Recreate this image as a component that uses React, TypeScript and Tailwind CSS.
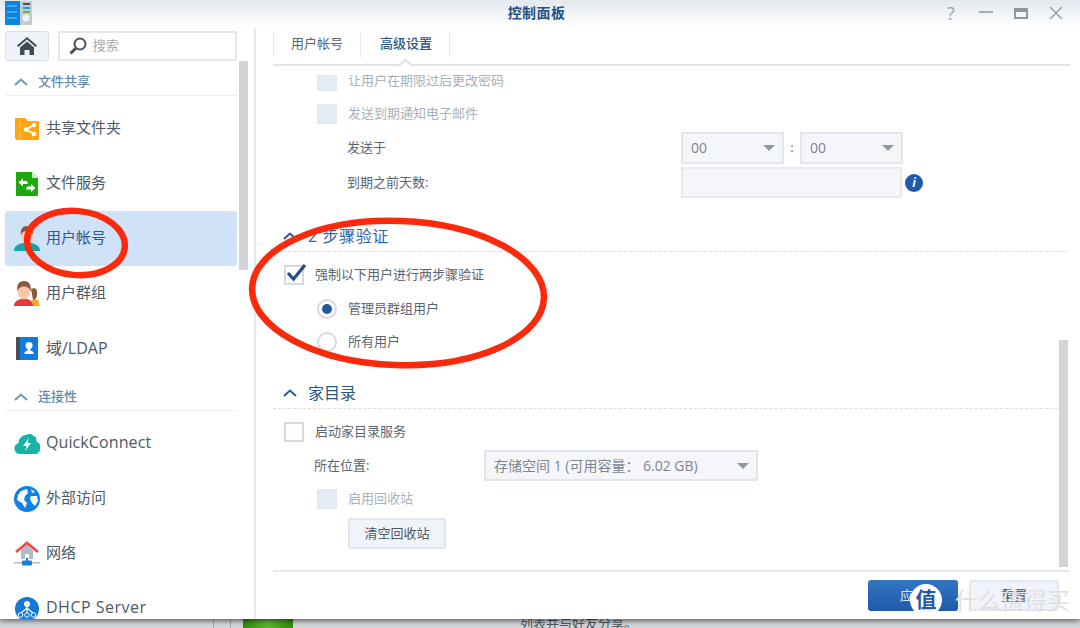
import React from 'react';

const cjk = { fontFamily: '"Open Sans", "Noto Sans CJK SC", sans-serif' };

// ---- sidebar icons ----

const FolderIcon = () => (
    <svg width="26" height="26" viewBox="0 0 26 26">
        <path d="M2 2h9l3 3h10a1 1 0 0 1 1 1v17a1 1 0 0 1-1 1H3a2 2 0 0 1-2-2V3a1 1 0 0 1 1-1z" fill="#ffa50f" />
        <path d="M6 5v19" stroke="#ffc254" strokeWidth="1" />
        <path d="M20 9l-8 4.500 8 4.500" stroke="#fff" strokeWidth="1.600" fill="none" />
        <circle cx="12" cy="13.500" r="2.300" fill="#fff" />
        <circle cx="20" cy="9" r="2.300" fill="#fff" />
        <circle cx="20" cy="18" r="2.300" fill="#fff" />
    </svg>
);

const FileServiceIcon = () => (
    <svg width="24" height="26" viewBox="0 0 24 26">
        <path d="M2 1h15l6 6v17a1 1 0 0 1-1 1H2a1 1 0 0 1-1-1V2a1 1 0 0 1 1-1z" fill="#1fa80e" />
        <path d="M17 1l6 6h-6z" fill="#c8eec2" />
        <path d="M12 10H8V7.500L3.500 11.500 8 15.500V13h5zM12 15.500h4V13l4.500 4-4.500 4v-2.500h-5z" fill="#fff" />
    </svg>
);

const UserIcon = () => (
    <svg width="26" height="26" viewBox="0 0 26 26">
        <path d="M0 25c0-5 4-7 9-8h8c5 1 9 3 9 8z" fill="#12a5a8" />
        <path d="M10 15h6v4l-3 2-3-2z" fill="#f6c9a6" />
        <ellipse cx="13" cy="9" rx="6" ry="8" fill="#f8c9a4" />
        <path d="M7 9C6 3 9 0 13 0s7 3 6 9c-1-3-3-4-6-4s-5 1-6 4z" fill="#8a5a3c" />
    </svg>
);

const GroupIcon = () => (
    <svg width="26" height="26" viewBox="0 0 26 26">
        <path d="M17 8c4-2 7 0 6 6 0 3-2 5-4 5z" fill="#8a5a3c" />
        <path d="M18 19l6 0 2 6h-7z" fill="#f5a81c" />
        <path d="M0 25c0-4 3-6 7-7h6c4 1 6 3 6 7z" fill="#e5393f" />
        <ellipse cx="10" cy="10" rx="6.500" ry="8.500" fill="#f8c9a4" />
        <path d="M3.500 10C2 3 6 0 10 0s8 3 6.500 10c-1-3-3-4.500-6.500-4.500S4.500 7 3.500 10z" fill="#8a5a3c" />
    </svg>
);

const DirectoryIcon = () => (
    <svg width="24" height="25" viewBox="0 0 24 25">
        <rect x="1" y="1" width="4" height="23" fill="#4a4f57" />
        <rect x="5" y="1" width="18" height="23" rx="1" fill="#0d7be0" />
        <circle cx="14" cy="9.500" r="3.500" fill="#fff" />
        <path d="M12.500 12h3v2.500l3 1.500v2h-9v-2l3-1.500z" fill="#fff" />
    </svg>
);

const CloudIcon = () => (
    <svg width="26" height="22" viewBox="0 0 26 22">
        <path d="M6 21a5.500 5.500 0 0 1-1.500-10.800A8 8 0 0 1 12 2c2-1.500 6-1.500 7.500 1 2.500.5 3.500 3 3 5.500A6.500 6.500 0 0 1 20 21z" fill="#17b3a8" />
        <path d="M15 5l-6 8h3.500L11 18l6-8h-3.500z" fill="#fff" />
    </svg>
);

const GlobeIcon = () => (
    <svg width="26" height="26" viewBox="0 0 26 26">
        <circle cx="13" cy="13" r="13" fill="#1180e8" />
        <path d="M7 5l6-2 1 4-3 3-1 4 3 3-2 5-3-5-5-3 1-5z" fill="#fff" />
        <path d="M17 10l6 0 1 5-3 5-3-3-2-4z" fill="#fff" />
        <path d="M17 3l4 3-3 1z" fill="#fff" />
    </svg>
);

const NetworkIcon = () => (
    <svg width="26" height="26" viewBox="0 0 26 26">
        <path d="M7 9l6-5 6 5v9H7z" fill="#aebcc8" />
        <path d="M2 11L13 2l11 9" stroke="#f2454a" strokeWidth="2.600" fill="none" />
        <rect x="11" y="13" width="4" height="5" fill="#fff" />
        <rect x="12" y="17" width="2" height="4" fill="#1f7ad0" />
        <rect x="0" y="21" width="26" height="1.500" fill="#aebcc8" />
        <rect x="8" y="19.500" width="10" height="5" rx="1" fill="#1c7fd8" />
    </svg>
);

const DhcpIcon = () => (
    <svg width="24" height="24" viewBox="0 0 24 24">
        <circle cx="12" cy="12" r="12" fill="#1478d8" />
        <circle cx="12" cy="7" r="3" fill="#fff" />
        <path d="M12 9v7M12 11l-6 5M12 11l6 5" stroke="#fff" strokeWidth="1.200" fill="none" />
        <circle cx="5.500" cy="18" r="2.300" fill="#1478d8" stroke="#fff" strokeWidth="1" />
        <circle cx="12" cy="18" r="2.300" fill="#1478d8" stroke="#fff" strokeWidth="1" />
        <circle cx="18.500" cy="18" r="2.300" fill="#1478d8" stroke="#fff" strokeWidth="1" />
    </svg>
);

const AppLogo = () => (
    <svg width="27" height="25" viewBox="0 0 27 25">
        <rect x="0" y="0" width="27" height="24" fill="#c3ccd2" />
        <rect x="0" y="0" width="15" height="24" fill="#0f84dd" />
        <path d="M2 5h10M2 11h10M2 17h10" stroke="#55b8f2" strokeWidth="1.500" />
        <rect x="18" y="2" width="7" height="2" fill="#3c5568" />
        <rect x="18" y="6" width="7" height="2" fill="#1a9bd8" />
        <rect x="18" y="10" width="7" height="2" fill="#66b82e" />
        <circle cx="21" cy="17" r="3.500" fill="#eef2f4" />
    </svg>
);

const Chevron = ({ color, width = 2 }: { color: string; width?: number }) => (
    <svg width="14" height="8" viewBox="0 0 14 8" className="shrink-0">
        <path d="M1 7l6-5.500L13 7" stroke={color} strokeWidth={width} fill="none" />
    </svg>
);

const Caret = () => (
    <span className="w-0 h-0 border-x-[6px] border-x-transparent border-t-[6px] border-t-[#8e99a5]" />
);

// ---- sidebar ----

const SideHeader = ({ title }: { title: string }) => (
    <div className="h-[35px] mb-[5px] mr-[17px] ml-[5px] pt-[7px] flex items-center gap-[10px] pl-[9px] border-b border-[#ebeff3]">
        <Chevron color="#6f97b8" />
        <span className="text-[13px] font-medium text-[#5f8cb0]">{title}</span>
    </div>
);

type SideItemProps = { icon: React.ReactNode; label: string; active?: boolean; labelClass?: string };

const SideItem = ({ icon, label, active, labelClass = 'text-[15px] pb-[2px]' }: SideItemProps) => (
    <div className={`h-[55px] ml-[5px] mr-[17px] flex items-center rounded-[3px] ${active ? 'bg-[#cfe2f8]' : ''}`}>
        <div className="w-[41px] shrink-0 flex justify-center pl-[2px]">{icon}</div>
        <span className={`${labelClass} ${active ? 'text-[#2e5b8d]' : 'text-[#4d5966]'}`}>{label}</span>
    </div>
);

function Sidebar() {
    return (
        <div className="relative w-[256px] shrink-0 border-r-2 border-[#e6e9ec] overflow-hidden">
            <div className="flex gap-[9px] pl-[5px] mr-[17px] pt-[3px]">
                <div className="w-[44px] h-[30px] flex items-center justify-center rounded-[3px] border border-[#d6dfe8] bg-[#eff3f8]">
                    <svg width="20" height="18" viewBox="0 0 20 18">
                        <path d="M10 0L0 8.500l1.300 1.500L10 2.600 18.700 10 20 8.500z" fill="#3f4c58" />
                        <path d="M3 10.500L10 4.500l7 6V18h-4.500v-5h-5v5H3z" fill="#3f4c58" />
                    </svg>
                </div>
                <div className="w-[180px] h-[30px] flex items-center gap-[6px] pl-[9px] border-2 border-[#e3e8ee] bg-white">
                    <svg width="18" height="18" viewBox="0 0 18 18">
                        <circle cx="11" cy="7" r="5.500" stroke="#48535e" strokeWidth="2" fill="none" />
                        <path d="M6.800 11.200L1.500 16.500" stroke="#48535e" strokeWidth="3" />
                    </svg>
                    <span className="text-[13px] text-[#a3abb3]">搜索</span>
                </div>
            </div>
            <SideHeader title="文件共享" />
            <SideItem icon={<FolderIcon />} label="共享文件夹" />
            <SideItem icon={<FileServiceIcon />} label="文件服务" />
            <SideItem icon={<UserIcon />} label="用户帐号" active />
            <SideItem icon={<GroupIcon />} label="用户群组" />
            <SideItem icon={<DirectoryIcon />} label="域/LDAP" labelClass="text-[16px] pb-[2px]" />
            <SideHeader title="连接性" />
            <SideItem icon={<CloudIcon />} label="QuickConnect" labelClass="text-[16px] tracking-[0.1px] pb-[4px]" />
            <SideItem icon={<GlobeIcon />} label="外部访问" />
            <SideItem icon={<NetworkIcon />} label="网络" />
            <SideItem icon={<DhcpIcon />} label="DHCP Server" labelClass="text-[16px] tracking-[0.5px] pb-[4px]" />
            <div className="absolute left-[239px] top-[33px] w-[9px] h-[209px] bg-[#d2d4d6]" />
        </div>
    );
}

// ---- form parts ----

const Check = ({ state }: { state: 'off' | 'on' | 'disabled' }) => (
    <div
        className={`relative w-[20px] h-[20px] shrink-0 border-2 ${
            state === 'disabled' ? 'border-[#e3e9f0] bg-[#e6ecf3]' : 'border-[#d3dae2] bg-white'
        }`}
    >
        {state === 'on' && (
            <svg width="22" height="20" viewBox="0 0 22 20" className="absolute left-[-1px] top-[-5px]">
                <path d="M3 11l5.500 6L20 3" stroke="#254f86" strokeWidth="3.200" fill="none" />
            </svg>
        )}
    </div>
);

const Radio = ({ on }: { on?: boolean }) => (
    <div className="w-[20px] h-[20px] shrink-0 rounded-full border-2 border-[#d3dae4] bg-white flex items-center justify-center">
        {on && <div className="w-[10px] h-[10px] rounded-full bg-[#23589c]" />}
    </div>
);

const Section = ({ title, faded }: { title: string; faded?: boolean }) => (
    <div className="h-[31px] flex items-center gap-[11px] pl-[10px] border-b border-dashed border-[#d8e0e8]">
        <Chevron color="#2d5a8e" />
        <span className={`text-[16px] ${faded ? 'text-[#2d66ae] tracking-[0.6px]' : 'text-[#2c5687]'}`}>{title}</span>
    </div>
);

const SelectBox = ({ value, className }: { value: string; className: string }) => (
    <div className={`flex items-center justify-between pl-[8px] pr-[7px] border-2 border-[#e0e6ed] bg-[#f4f6f9] ${className}`}>
        <span className="text-[14px] whitespace-pre text-[#7d858d]">{value}</span>
        <Caret />
    </div>
);

function Tabs() {
    return (
        <div className="relative h-[35px] shrink-0 border-b-2 border-[#e1e3e6] ml-[17px] mr-[10px] flex items-start">
            <div className="h-[26px] px-[17px] flex items-center border-x border-[#e3e9f0] text-[13px] text-[#5a6570]">用户帐号</div>
            <div className="h-[26px] pl-[19px] pr-[17px] flex items-center border-r border-[#e3e9f0] text-[13px] font-medium text-[#2c5687]">高级设置</div>
            <div className="absolute left-[128px] top-[29px] w-[9px] h-[9px] rotate-45 bg-white border-l-2 border-t-2 border-[#e1e3e6]" />
        </div>
    );
}

// everything in the scrolled settings form; the first row sits partly under the white band
function SettingsForm() {
    return (
        <div className="flex-1 min-h-0 overflow-hidden ml-[17px] mr-[12px] relative">
            <div className="absolute left-0 right-0 top-0 h-[9px] bg-white z-10" />
            <div className="text-[13px] text-[#5a6570] -mt-[1px]">
                <div className="h-[32px] flex items-center gap-[11px] pl-[44px] text-[#a9b0b7]">
                    <Check state="disabled" />
                    <span>让用户在期限过后更改密码</span>
                </div>
                <div className="h-[33px] flex items-center gap-[11px] pl-[44px] text-[#a9b0b7]">
                    <Check state="disabled" />
                    <span>发送到期通知电子邮件</span>
                </div>
                <div className="h-[35px] flex items-center pl-[74px]">
                    <span className="w-[334px]">发送于</span>
                    <SelectBox value="00" className="w-[103px] h-[32px]" />
                    <span className="w-[16px] text-center">:</span>
                    <SelectBox value="00" className="w-[103px] h-[32px]" />
                </div>
                <div className="h-[35px] flex items-center pl-[74px]">
                    <span className="w-[334px]">到期之前天数:</span>
                    <div className="w-[221px] h-[31px] border-2 border-[#e6eaef] bg-[#f4f6f9]" />
                    <div className="ml-[3px] w-[18px] h-[18px] rounded-full bg-[#1f5ba8] flex items-center justify-center text-white text-[12px] font-bold italic">i</div>
                </div>

                <div className="mt-[21px]">
                    <Section title="2 步骤验证" faded />
                </div>
                <div className="h-[46px] flex items-center gap-[11px] pl-[11px]">
                    <Check state="on" />
                    <span>强制以下用户进行两步骤验证</span>
                </div>
                <div className="h-[33px] -mt-[6px] flex items-center gap-[11px] pl-[44px]">
                    <Radio on />
                    <span>管理员群组用户</span>
                </div>
                <div className="h-[33px] flex items-center gap-[11px] pl-[44px]">
                    <Radio />
                    <span>所有用户</span>
                </div>

                <div className="mt-[20px]">
                    <Section title="家目录" />
                </div>
                <div className="h-[46px] flex items-center gap-[11px] pl-[11px]">
                    <Check state="off" />
                    <span>启动家目录服务</span>
                </div>
                <div className="h-[33px] -mt-[6px] flex items-center pl-[41px]">
                    <span className="w-[170px]">所在位置:</span>
                    <SelectBox value="存储空间 1 (可用容量： 6.02 GB)" className="w-[274px] h-[31px]" />
                </div>
                <div className="h-[33px] flex items-center gap-[11px] pl-[44px] text-[#a9b0b7]">
                    <Check state="disabled" />
                    <span>启用回收站</span>
                </div>
                <div className="pl-[75px] mt-[3px]">
                    <div className="w-[98px] h-[31px] flex items-center justify-center rounded-[3px] border-2 border-[#dfe6ef] bg-[#f0f4fa] text-[#4d5966]">清空回收站</div>
                </div>
            </div>
            <div className="absolute right-[0px] top-[274px] w-[9px] h-[227px] bg-[#d2d4d6]" />
        </div>
    );
}

function Footer() {
    return (
        <div className="h-[49px] shrink-0 border-t-2 border-[#e6e8ea] ml-[17px] mr-[10px] flex justify-end items-start gap-[11px] pt-[8px] pr-[11px] text-[13px]">
            <div className="w-[90px] h-[31px] flex items-center justify-center rounded-[3px] bg-gradient-to-b from-[#3475c4] to-[#1f5aa6] text-[#dfe9f5]">应用</div>
            <div className="w-[90px] h-[31px] flex items-center justify-center rounded-[3px] border-2 border-[#e1e7ef] bg-[#f0f4fa] text-[#4d5966]">重置</div>
        </div>
    );
}

export default function App() {
    return (
        <div className="relative w-[1080px] h-[628px] overflow-hidden bg-gradient-to-b from-[#8f9296] to-[#d3d6d9]" style={cjk}>
            <div className="w-full h-[619px] bg-white flex flex-col shadow-[0_2px_5px_rgba(0,0,0,0.55)] relative z-10">
                {/* title bar */}
                <div className="relative h-[28px] shrink-0 flex items-center justify-center pr-[7px] pb-[3px] bg-gradient-to-b from-[#e4e9ef] to-white">
                    <div className="absolute left-[5px] top-[1px]"><AppLogo /></div>
                    <span className="text-[14px] font-semibold tracking-[0.4px] text-[#264f84]">控制面板</span>
                    <div className="absolute right-[17px] top-[6px] flex items-center gap-[21px]">
                        <span className="w-[14px] text-[18px] leading-[14px] text-center text-[#9ba4ad]">?</span>
                        <span className="w-[14px] h-[2px] -mt-[2px] bg-[#a5adb5]" />
                        <span className="w-[14px] h-[11px] border-2 border-t-[4px] border-[#8f98a1]" />
                        <svg width="14" height="14" viewBox="0 0 14 14">
                            <path d="M1 1l12 12M13 1L1 13" stroke="#9ba4ad" strokeWidth="1.500" />
                        </svg>
                    </div>
                </div>

                <div className="flex-1 min-h-0 flex">
                    <Sidebar />
                    <div className="flex-1 min-w-0 flex flex-col pt-[3px]">
                        <Tabs />
                        <SettingsForm />
                        <Footer />
                    </div>
                </div>
            </div>

            {/* strip of the desktop window showing underneath */}
            <div className="absolute left-[213px] top-[619px] w-[1px] h-[9px] bg-[#a5a8ac]" />
            <div className="absolute left-[230px] top-[619px] w-[1px] h-[9px] bg-[#a5a8ac]" />
            <div className="absolute left-[243px] top-[619px] w-[50px] h-[9px] bg-gradient-to-r from-[#2d8a10] via-[#5cb82e] to-[#2d8a10]" />
            <div className="absolute left-[520px] top-[614px] text-[13px] text-[#4d5966]">列表并与好友分享。</div>

            {/* hand drawn red marks */}
            <svg width="1080" height="628" viewBox="0 0 1080 628" className="absolute inset-0 z-20 pointer-events-none">
                <ellipse cx="76" cy="243" rx="49" ry="32" fill="none" stroke="#fb2a0c" strokeWidth="6.500" transform="rotate(5 76 243)" />
                <ellipse cx="398" cy="293" rx="146" ry="72" fill="none" stroke="#fb2a0c" strokeWidth="6.500" transform="rotate(2 398 293)" />
            </svg>

            {/* site stamp in the corner */}
            <div className="absolute left-[910px] top-[584px] z-30 flex items-center gap-[13px]">
                <div className="w-[32px] h-[32px] rounded-full bg-white flex items-center justify-center text-[21px] text-[#1f5aa6] font-bold">值</div>
                <span className="text-[23px] leading-[32px] text-[#dfe0e1]">什么值得买</span>
            </div>
        </div>
    );
}
